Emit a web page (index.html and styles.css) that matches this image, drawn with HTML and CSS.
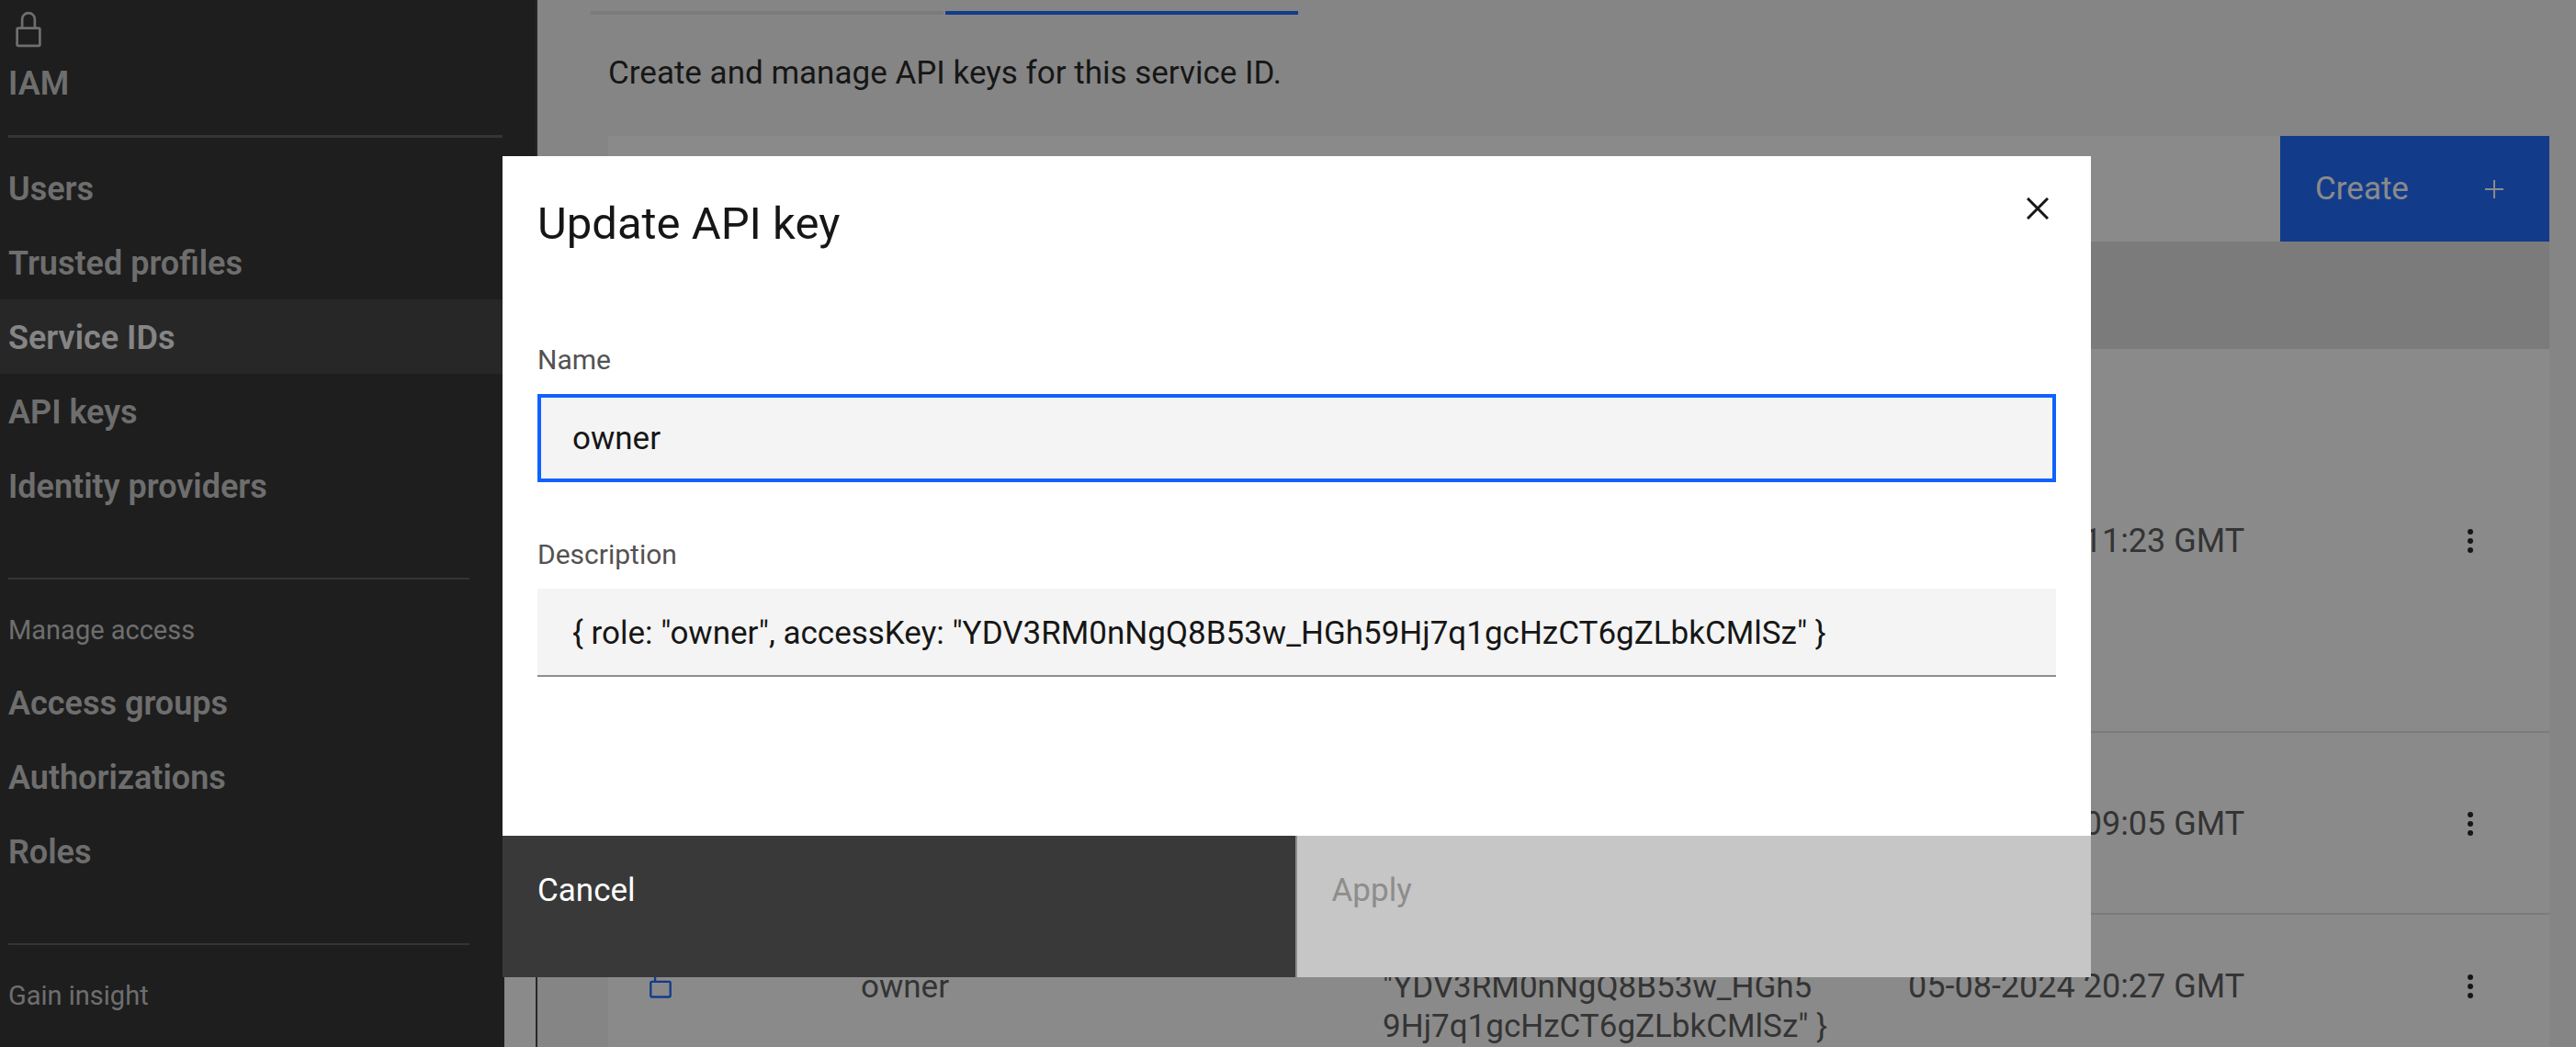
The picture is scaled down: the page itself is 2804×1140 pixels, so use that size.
FILE: index.html
```html
<!DOCTYPE html>
<html lang="en">
<head>
<meta charset="utf-8">
<title>IAM – Update API key</title>
<link rel="stylesheet" href="styles.css">
</head>
<body>
<div class="shell">
  <aside class="side">
    <header class="side-head">
      <svg class="lock" viewBox="0 0 32 32" aria-hidden="true"><path d="M24 14h-2V8a6 6 0 0 0-12 0v6H8a2 2 0 0 0-2 2v12a2 2 0 0 0 2 2h16a2 2 0 0 0 2-2V16a2 2 0 0 0-2-2ZM12 8a4 4 0 0 1 8 0v6h-8Zm12 20H8V16h16Z"/></svg>
      <h1 class="side-title">IAM</h1>
    </header>
    <nav class="nav" aria-label="IAM">
      <a class="nav-link" href="#users">Users</a>
      <a class="nav-link" href="#profiles">Trusted profiles</a>
      <a class="nav-link current" href="#service-ids" aria-current="page">Service IDs</a>
      <a class="nav-link" href="#api-keys">API keys</a>
      <a class="nav-link" href="#providers">Identity providers</a>
      <h2 class="nav-label">Manage access</h2>
      <a class="nav-link" href="#groups">Access groups</a>
      <a class="nav-link" href="#authorizations">Authorizations</a>
      <a class="nav-link" href="#roles">Roles</a>
      <h2 class="nav-label">Gain insight</h2>
    </nav>
  </aside>
  <main class="main">
    <div class="tabs"><span class="tab"></span><span class="tab active"></span></div>
    <p class="intro">Create and manage API keys for this service ID.</p>
    <section class="panel">
      <div class="toolbar">
        <button class="create" type="button">Create
          <svg class="plus" viewBox="0 0 20 20" aria-hidden="true"><path d="M10 0v20M0 10h20"/></svg>
        </button>
      </div>
      <table class="keys">
        <colgroup><col class="c-status"><col class="c-name"><col class="c-desc"><col class="c-date"><col></colgroup>
        <thead><tr><th></th><th></th><th></th><th></th><th></th></tr></thead>
        <tbody>
          <tr class="tall"><td></td><td></td><td></td><td class="date">05-08-2024 11:23 GMT</td>
            <td><button class="more" type="button" aria-label="Options"><svg viewBox="0 0 6 26"><circle cx="3" cy="3" r="3"/><circle cx="3" cy="13" r="3"/><circle cx="3" cy="23" r="3"/></svg></button></td></tr>
          <tr class="mid"><td></td><td></td><td></td><td class="date">05-08-2024 09:05 GMT</td>
            <td><button class="more" type="button" aria-label="Options"><svg viewBox="0 0 6 26"><circle cx="3" cy="3" r="3"/><circle cx="3" cy="13" r="3"/><circle cx="3" cy="23" r="3"/></svg></button></td></tr>
          <tr><td><svg class="unlock" viewBox="0 0 32 32" aria-hidden="true"><path d="M24 14H12V8a4 4 0 0 1 8 0h2a6 6 0 0 0-12 0v6H8a2 2 0 0 0-2 2v12a2 2 0 0 0 2 2h16a2 2 0 0 0 2-2V16a2 2 0 0 0-2-2Zm0 14H8V16h16Z"/></svg></td><td>owner</td>
            <td>{ role: "owner", accessKey:<br>"YDV3RM0nNgQ8B53w_HGh5<br>9Hj7q1gcHzCT6gZLbkCMlSz" }</td><td class="date">05-08-2024 20:27 GMT</td>
            <td><button class="more" type="button" aria-label="Options"><svg viewBox="0 0 6 26"><circle cx="3" cy="3" r="3"/><circle cx="3" cy="13" r="3"/><circle cx="3" cy="23" r="3"/></svg></button></td></tr>
        </tbody>
      </table>
    </section>
  </main>
</div>
<div class="overlay">
  <form class="modal" role="dialog" aria-modal="true" aria-labelledby="modal-title">
    <header class="modal-head">
      <h2 class="modal-title" id="modal-title">Update API key</h2>
      <button class="close" type="button" aria-label="Close"><svg viewBox="0 0 24 24"><path d="M1 1l22 22M23 1L1 23"/></svg></button>
    </header>
    <div class="modal-body">
      <div class="field">
        <label for="key-name">Name</label>
        <input class="focused" id="key-name" type="text" value="owner">
      </div>
      <div class="field">
        <label for="key-desc">Description</label>
        <input id="key-desc" type="text" value='{ role: "owner", accessKey: "YDV3RM0nNgQ8B53w_HGh59Hj7q1gcHzCT6gZLbkCMlSz" }'>
      </div>
    </div>
    <footer class="modal-foot">
      <button class="cancel" type="button">Cancel</button>
      <button class="apply" type="submit" disabled>Apply</button>
    </footer>
  </form>
</div>
</body>
</html>
```
FILE: styles.css
```css
* { box-sizing: border-box; }
body {
  margin: 0;
  font: 35px/43px Roboto, "Liberation Sans", sans-serif;
  color: #161616;
  background: #fff;
}
h1, h2, p { margin: 0; }
button { font: inherit; border: 0; border-radius: 0; text-align: left; cursor: pointer; }
svg { display: block; }

.shell { display: flex; height: 100vh; overflow: hidden; }

/* Side navigation */
.side { flex: none; width: 585px; border-right: 2px solid #393939; }
.side-head {
  height: 170px;
  padding: 10px 36px 0 9px;
  background: #262626;
  color: #c6c6c6;
}
.lock { width: 44px; height: 44px; fill: #c6c6c6; }
.side-title {
  height: 96px;
  padding-top: 16px;
  border-bottom: 3px solid #525252;
  font-size: 36px;
  line-height: 43px;
  font-weight: 600;
}
.nav { width: 549px; height: 100%; margin-top: -6px; background: #262626; color: #c6c6c6; }
.nav-link {
  display: block;
  height: 81px;
  padding: 21px 9px 0;
  color: inherit;
  font-size: 36px;
  font-weight: 600;
  text-decoration: none;
}
.nav-link.current { background: #393939; color: #f4f4f4; }
.nav-label {
  height: 95px;
  margin: 60px 38px 0 9px;
  padding-top: 34px;
  border-top: 2px solid #525252;
  font-size: 29px;
  font-weight: 400;
}

/* Page content */
.main { flex: 1; min-width: 0; padding: 12px 29px 0 58px; background: #f4f4f4; }
.tabs { display: flex; gap: 2px; }
.tab { width: 384px; height: 4px; background: #e0e0e0; }
.tab.active { background: #0f62fe; }
.intro { padding: 42px 19px 47px; }
.panel { margin-left: 19px; background: #fff; }
.toolbar { display: flex; justify-content: flex-end; height: 115px; }
.create {
  display: flex;
  justify-content: space-between;
  align-items: center;
  width: 293px;
  padding: 0 50px 0 38px;
  background: #0f62fe;
  color: #fff;
}
.plus { width: 20px; height: 20px; stroke: currentColor; stroke-width: 2; }
.keys { width: 100%; table-layout: fixed; border-collapse: separate; border-spacing: 0; }
.keys th { height: 117px; background: #e0e0e0; }
.keys td {
  height: 156px;
  padding: 2px 0 0 38px;
  border-bottom: 2px solid #e0e0e0;
  color: #525252;
  vertical-align: middle;
}
.keys .tall td { height: 418px; }
.keys .mid td { height: 198px; }
.keys .date { padding-left: 42px; font-size: 36px; }
.c-status { width: 237px; }
.c-name, .c-desc, .c-date { width: 568px; }
.more { display: block; margin-left: auto; margin-right: 83px; padding: 0; background: none; }
.more svg { width: 6px; height: 26px; fill: #161616; }
.unlock { width: 38px; height: 38px; margin-bottom: 8px; fill: #0f62fe; }

/* Modal */
.overlay { position: fixed; inset: 0; padding: 170px 528px 0 547px; background: rgba(22, 22, 22, .5); }
.modal { background: #fff; }
.modal-head { display: flex; justify-content: space-between; height: 200px; padding: 43px 46px 0 38px; }
.modal-title { font-size: 49px; line-height: 62px; font-weight: 400; }
.close { width: 24px; height: 24px; margin-top: 2px; padding: 0; background: none; }
.close svg { width: 24px; height: 24px; stroke: #161616; stroke-width: 3; }
.modal-body { display: grid; gap: 57px; padding: 0 38px 173px; }
.field { display: grid; gap: 15px; }
.field label { color: #525252; font-size: 30px; line-height: 44px; }
.field input {
  width: 100%;
  height: 96px;
  padding: 2px 38px 0;
  border: 0;
  border-bottom: 2px solid #8d8d8d;
  border-radius: 0;
  background: #f4f4f4;
  color: #161616;
  font: inherit;
  outline: 0;
}
.field .focused { padding: 0 34px; border: 4px solid #0f62fe; }
.modal-foot { display: grid; grid-template-columns: 1fr 1fr; }
.modal-foot button { height: 154px; padding: 38px 38px 73px; color: #fff; }
.modal-foot .cancel { border-right: 2px solid #8d8d8d; background: #393939; }
.modal-foot .apply { background: #c6c6c6; color: #8d8d8d; cursor: not-allowed; }
```
